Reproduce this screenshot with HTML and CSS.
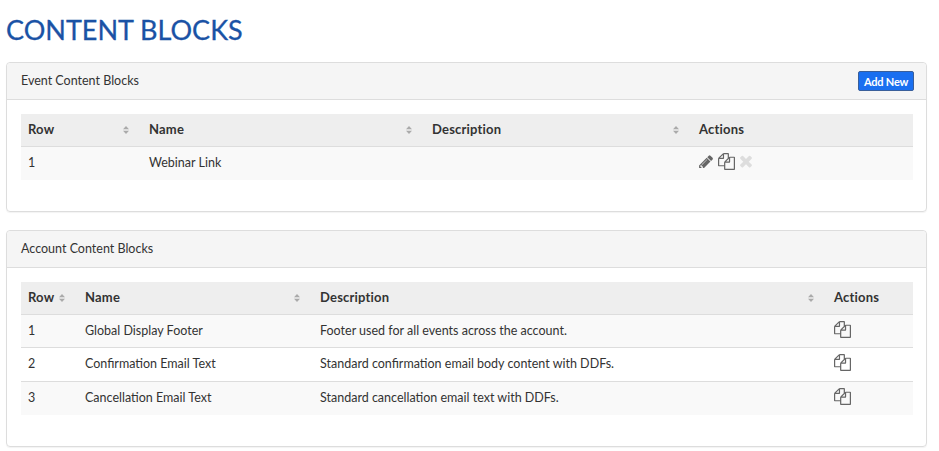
FILE: index.html
```html
<!DOCTYPE html>
<html lang="en">
<head>
  <meta charset="UTF-8" />
  <title>Content Blocks</title>
  <link rel="stylesheet" href="styles.css">
</head>
<body>

  <svg class="defs" width="0" height="0">
    <symbol id="i-pencil" viewBox="0 0 1515 1536"><path d="M363 1536l91-91-235-235-91 91v107h128v128h107zm523-928q0-22-22-22-10 0-17 7l-542 542q-7 7-7 17 0 22 22 22 10 0 17-7l542-542q7-7 7-17zm-54-192l416 416-832 832h-416v-416zm683 96q0 53-37 90l-166 166-416-416 166-165q36-38 90-38 53 0 91 38l235 234q37 39 37 91z"/></symbol>
    <symbol id="i-copy" viewBox="0 0 1792 1792"><path d="M1696 384q40 0 68 28t28 68v1216q0 40-28 68t-68 28h-960q-40 0-68-28t-28-68v-288h-544q-40 0-68-28t-28-68v-672q0-40 20-88t48-76l408-408q28-28 76-48t88-20h416q40 0 68 28t28 68v328q68-40 128-40h416zm-544 213l-299 299h299v-299zm-640-384l-299 299h299v-299zm196 647l316-316v-416h-384v416q0 40-28 68t-68 28h-416v640h512v-256q0-40 20-88t48-76zm956 804v-1152h-384v416q0 40-28 68t-68 28h-416v640h896z"/></symbol>
    <symbol id="i-times" viewBox="0 0 1408 1792"><path d="M1298 1322q0 40-28 68l-136 136q-28 28-68 28t-68-28l-294-294-294 294q-28 28-68 28t-68-28l-136-136q-28-28-28-68t28-68l294-294-294-294q-28-28-28-68t28-68l136-136q28-28 68-28t68 28l294 294 294-294q28-28 68-28t68 28l136 136q28 28 28 68t-28 68l-294 294 294 294q28 28 28 68z"/></symbol>
  </svg>

  <h1>CONTENT BLOCKS</h1>

  <div class="panel">
    <div class="panel-head">
      <span>Event Content Blocks</span>
      <button type="button">Add New</button>
    </div>
    <div class="panel-body">
      <table class="event-table">
        <thead>
          <tr>
            <th class="sort">Row</th>
            <th class="sort">Name</th>
            <th class="sort">Description</th>
            <th>Actions</th>
          </tr>
        </thead>
        <tbody>
          <tr>
            <td>1</td>
            <td>Webinar Link</td>
            <td></td>
            <td class="actions">
              <svg class="icon pencil"><use href="#i-pencil"/></svg>
              <svg class="icon copy"><use href="#i-copy"/></svg>
              <svg class="icon times"><use href="#i-times"/></svg>
            </td>
          </tr>
        </tbody>
      </table>
    </div>
  </div>

  <div class="panel">
    <div class="panel-head">
      <span>Account Content Blocks</span>
    </div>
    <div class="panel-body">
      <table class="account-table">
        <thead>
          <tr>
            <th class="sort">Row</th>
            <th class="sort">Name</th>
            <th class="sort">Description</th>
            <th>Actions</th>
          </tr>
        </thead>
        <tbody>
          <tr>
            <td>1</td>
            <td>Global Display Footer</td>
            <td>Footer used for all events across the account.</td>
            <td class="actions"><svg class="icon copy"><use href="#i-copy"/></svg></td>
          </tr>
          <tr>
            <td>2</td>
            <td>Confirmation Email Text</td>
            <td>Standard confirmation email body content with DDFs.</td>
            <td class="actions"><svg class="icon copy"><use href="#i-copy"/></svg></td>
          </tr>
          <tr>
            <td>3</td>
            <td>Cancellation Email Text</td>
            <td>Standard cancellation email text with DDFs.</td>
            <td class="actions"><svg class="icon copy"><use href="#i-copy"/></svg></td>
          </tr>
        </tbody>
      </table>
    </div>
  </div>

</body>
</html>
```

FILE: styles.css
```css
body {
  font-family: Lato, sans-serif;
  font-size: 12.5px;
  color: #333;
  background-color: #fff;
  margin: 0;
  padding: 0 12px 0 6px;
  overflow: hidden;
}
h1 {
  font-size: 27px;
  font-weight: 400;
  line-height: 33px;
  color: #1a52a5;
  -webkit-text-stroke: 0.3px #1a52a5;
  margin: 0 0 16px 0;
  padding-top: 13px;
}
.defs {
  position: absolute;
}
.panel {
  border: 1px solid #ddd;
  border-radius: 4px;
  margin-bottom: 18px;
  box-shadow: 0 1px 1px rgba(0, 0, 0, 0.05);
}
.panel-head {
  display: flex;
  justify-content: space-between;
  align-items: center;
  padding: 0 12px 2px 14px;
  box-sizing: border-box;
  height: 37px;
  background-color: #f5f5f5;
  border-bottom: 1px solid #ddd;
  border-radius: 4px 4px 0 0;
}
.panel-body {
  padding: 14px 13px 31px 14px;
}
button {
  font-family: Lato, sans-serif;
  font-size: 11px;
  font-weight: 700;
  letter-spacing: -0.2px;
  height: 20px;
  width: 56px;
  padding: 0;
  margin-top: 2px;
  color: #fff;
  background-color: #1a6ff0;
  border: 1px solid #3a5f9a;
  border-radius: 2px;
}
table {
  width: 100%;
  table-layout: fixed;
  border-collapse: collapse;
}
th {
  text-align: left;
  font-size: 13px;
  font-weight: 700;
  letter-spacing: 0.2px;
  height: 32px;
  padding: 0 8px 1px;
  background-color: #eee;
  border-bottom: 1px solid #ddd;
  box-sizing: border-box;
}
.sort {
  background-image: url("data:image/svg+xml,%3Csvg xmlns='http://www.w3.org/2000/svg' width='6' height='8'%3E%3Cpath fill='%23aaa' d='M3 0L6 3.2H0zM3 8L0 4.8H6z'/%3E%3C/svg%3E");
  background-repeat: no-repeat;
  background-position: right 12px center;
}
td {
  height: 33px;
  padding: 0 8px 2px;
  background-color: #f9f9f9;
  border-top: 1px solid #ddd;
  box-sizing: border-box;
}
tbody tr:first-child td {
  border-top: none;
}
tbody tr:last-child td {
  height: 34px;
}
th:first-child,
td:first-child {
  padding-left: 7px;
}
.account-table tbody tr:first-child td {
  padding-bottom: 0;
}
.account-table tbody tr:nth-child(2) td {
  height: 34px;
  background-color: #fff;
}
.event-table th:nth-child(1) { width: 120px; }
.event-table th:nth-child(2) { width: 283px; }
.event-table th:nth-child(3) { width: 267px; }
.account-table th:nth-child(1) { width: 56px; }
.account-table th:nth-child(2) { width: 235px; }
.account-table th:nth-child(3) { width: 514px; }
td.actions {
  white-space: nowrap;
  font-size: 0;
  padding-bottom: 4px;
}
.account-table tbody tr:first-child td.actions {
  padding-bottom: 2px;
}
.icon {
  display: inline-block;
  vertical-align: middle;
  fill: #666;
}
.pencil {
  width: 14px;
  height: 14px;
  margin-right: 5px;
}
.copy {
  width: 17px;
  height: 17px;
  margin-right: 5px;
}
.times {
  width: 14px;
  height: 18px;
  margin-left: -1px;
  fill: #ddd;
}
```
